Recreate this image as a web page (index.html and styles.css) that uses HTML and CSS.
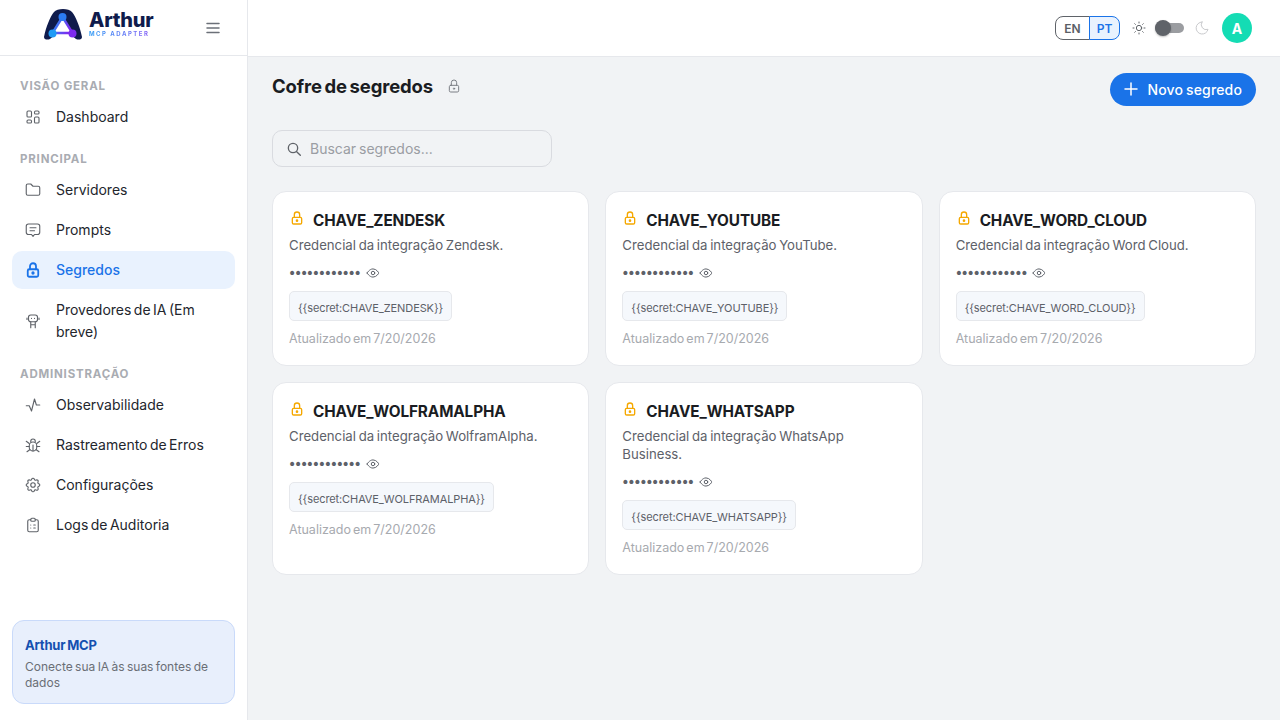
FILE: index.html
```html
<!DOCTYPE html>
<html lang="pt">
<head>
    <meta charset="UTF-8">
    <meta name="viewport" content="width=device-width, initial-scale=1.0">
    <title>Cofre de segredos</title>
    <link rel="stylesheet" href="styles.css">
</head>
<body>
    <svg class="icon-defs" width="0" height="0">
        <defs>
            <linearGradient id="logoGrad" x1="0" y1="0" x2="1" y2="0.4">
                <stop offset="0" stop-color="#1f9bf5"/>
                <stop offset="1" stop-color="#7c2bf0"/>
            </linearGradient>
            <symbol id="i-lock" viewBox="0 0 24 24"><rect x="5" y="11" width="14" height="10" rx="2"/><circle cx="12" cy="16" r="1"/><path d="M8 11V7a4 4 0 0 1 8 0v4"/></symbol>
            <symbol id="i-eye" viewBox="0 0 24 24"><path d="M2 12s3.6-7 10-7 10 7 10 7-3.6 7-10 7-10-7-10-7z"/><circle cx="12" cy="12" r="3"/></symbol>
        </defs>
    </svg>

    <aside class="sidebar">
        <div class="brand">
            <div class="logo">
                <svg class="logo-mark" width="40" height="34" viewBox="0 0 40 34">
                    <path d="M1 30C3 20 7 10 11 5 14 1 26 1 29 5 33 10 37 20 39 30 39 33 35 33 33 32 30 30 29 28 27 27H13C11 28 10 30 7 32 5 33 1 33 1 30Z" fill="#0f1b4c"/>
                    <path d="M19.500 10 9.500 26H29.500Z" fill="#ffffff" stroke="url(#logoGrad)" stroke-width="2.4"/>
                    <circle cx="19.500" cy="10" r="4" fill="#2b7bf3"/>
                    <circle cx="9.500" cy="26.500" r="4" fill="#1f9bf5"/>
                    <circle cx="29.500" cy="26.500" r="4" fill="#7c2bf0"/>
                </svg>
                <div class="logo-text">
                    <div class="logo-name">Arthur</div>
                    <div class="logo-sub">MCP ADAPTER</div>
                </div>
            </div>
            <svg class="burger" width="16" height="16" viewBox="0 0 16 16"><path d="M2 3.500h12M2 8h12M2 12.500h12"/></svg>
        </div>

        <nav class="nav">
            <div class="nav-label first">VISÃO GERAL</div>
            <a class="nav-item">
                <svg class="nav-icon" viewBox="0 0 24 24"><rect x="4" y="4" width="6" height="8" rx="1.500"/><rect x="14" y="4" width="6" height="4" rx="1.500"/><rect x="4" y="16" width="6" height="4" rx="1.500"/><rect x="14" y="12" width="6" height="8" rx="1.500"/></svg>
                Dashboard
            </a>

            <div class="nav-label">PRINCIPAL</div>
            <a class="nav-item">
                <svg class="nav-icon" viewBox="0 0 24 24"><path d="M5 4h4l3 3h7a2 2 0 0 1 2 2v8a2 2 0 0 1-2 2H5a2 2 0 0 1-2-2V6a2 2 0 0 1 2-2z"/></svg>
                Servidores
            </a>
            <a class="nav-item">
                <svg class="nav-icon" viewBox="0 0 24 24"><path d="M6 4h12a3 3 0 0 1 3 3v8a3 3 0 0 1-3 3h-4l-2 2.500L10 18H6a3 3 0 0 1-3-3V7a3 3 0 0 1 3-3z"/><path d="M8 9h8M8 13h6"/></svg>
                Prompts
            </a>
            <a class="nav-item active">
                <svg class="nav-icon" viewBox="0 0 24 24"><use href="#i-lock"/></svg>
                Segredos
            </a>
            <a class="nav-item tall">
                <svg class="nav-icon" viewBox="0 0 24 24"><rect x="6" y="4" width="12" height="9" rx="3"/><path d="M10 8.500h.01M14 8.500h.01M4 8v2M20 8v2M9 13v8M15 13v8M9 17h6"/></svg>
                <span>Provedores de IA (Em breve)</span>
            </a>

            <div class="nav-label">ADMINISTRAÇÃO</div>
            <a class="nav-item">
                <svg class="nav-icon" viewBox="0 0 24 24"><path d="M3 13h4l3 7 4-16 2.500 8H21"/></svg>
                Observabilidade
            </a>
            <a class="nav-item">
                <svg class="nav-icon" viewBox="0 0 24 24"><path d="M9 8V7a3 3 0 0 1 6 0v1"/><rect x="7" y="8" width="10" height="12" rx="5"/><path d="M12 12v8M3 7l4 3M21 7l-4 3M3 14h4M21 14h-4M4 21l4-3M20 21l-4-3"/></svg>
                Rastreamento de Erros
            </a>
            <a class="nav-item">
                <svg class="nav-icon" viewBox="0 0 24 24"><path d="M10.300 4.300c.4-1.700 3-1.700 3.400 0a1.700 1.700 0 0 0 2.600 1.100c1.500-.9 3.300.8 2.400 2.400a1.700 1.700 0 0 0 1 2.500c1.800.4 1.800 3 0 3.400a1.700 1.700 0 0 0-1 2.600c.9 1.500-.9 3.300-2.400 2.400a1.700 1.700 0 0 0-2.600 1c-.4 1.800-3 1.800-3.400 0a1.700 1.700 0 0 0-2.600-1c-1.500.9-3.300-.9-2.400-2.400a1.700 1.700 0 0 0-1-2.600c-1.800-.4-1.800-3 0-3.400a1.700 1.700 0 0 0 1-2.500c-.9-1.600.9-3.300 2.400-2.400a1.700 1.700 0 0 0 2.600-1.100z"/><circle cx="12" cy="12" r="3"/></svg>
                Configurações
            </a>
            <a class="nav-item">
                <svg class="nav-icon" viewBox="0 0 24 24"><path d="M9 5H7a2 2 0 0 0-2 2v12a2 2 0 0 0 2 2h10a2 2 0 0 0 2-2V7a2 2 0 0 0-2-2h-2"/><rect x="9" y="3" width="6" height="4" rx="1.500"/><path d="M9 12h.01M13 12h2M9 16h.01M13 16h2"/></svg>
                Logs de Auditoria
            </a>
        </nav>

        <div class="promo">
            <div class="promo-title">Arthur MCP</div>
            <div class="promo-text">Conecte sua IA às suas fontes de dados</div>
        </div>
    </aside>

    <div class="page">
        <header class="topbar">
            <div class="lang">
                <span class="lang-btn">EN</span>
                <span class="lang-btn on">PT</span>
            </div>
            <svg class="sun" width="16" height="16" viewBox="0 0 24 24"><circle cx="12" cy="12" r="4"/><path d="M3 12h1.500M19.500 12H21M12 3v1.500M12 19.500V21M5.600 5.600l1 1M17.400 17.400l1 1M5.600 18.400l1-1M17.400 6.600l1-1"/></svg>
            <div class="toggle"><span class="knob"></span></div>
            <svg class="moon" width="16" height="16" viewBox="0 0 24 24"><path d="M12 3a9 9 0 1 0 9 11A7.500 7.500 0 0 1 12 3z"/></svg>
            <div class="avatar">A</div>
        </header>

        <main class="main">
            <div class="page-head">
                <div class="page-title">
                    <h1>Cofre de segredos</h1>
                    <svg class="title-lock" width="16" height="16"><use href="#i-lock"/></svg>
                </div>
                <button class="new-btn">
                    <svg width="16" height="16" viewBox="0 0 16 16"><path d="M8 2v12M2 8h12"/></svg>
                    Novo segredo
                </button>
            </div>

            <div class="search">
                <svg width="16" height="16" viewBox="0 0 24 24"><circle cx="10.500" cy="10.500" r="7"/><path d="M16 16l5.500 5.500"/></svg>
                <span>Buscar segredos...</span>
            </div>

            <div class="cards">
                <div class="card">
                    <div class="card-head"><svg class="card-lock" width="16" height="16"><use href="#i-lock"/></svg><h3>CHAVE_ZENDESK</h3></div>
                    <p class="card-desc">Credencial da integração Zendesk.</p>
                    <div class="mask"><span class="dots">••••••••••••</span><svg class="eye" width="14" height="14"><use href="#i-eye"/></svg></div>
                    <code class="chip">{{secret:CHAVE_ZENDESK}}</code>
                    <div class="updated">Atualizado em 7/20/2026</div>
                </div>
                <div class="card">
                    <div class="card-head"><svg class="card-lock" width="16" height="16"><use href="#i-lock"/></svg><h3>CHAVE_YOUTUBE</h3></div>
                    <p class="card-desc">Credencial da integração YouTube.</p>
                    <div class="mask"><span class="dots">••••••••••••</span><svg class="eye" width="14" height="14"><use href="#i-eye"/></svg></div>
                    <code class="chip">{{secret:CHAVE_YOUTUBE}}</code>
                    <div class="updated">Atualizado em 7/20/2026</div>
                </div>
                <div class="card">
                    <div class="card-head"><svg class="card-lock" width="16" height="16"><use href="#i-lock"/></svg><h3>CHAVE_WORD_CLOUD</h3></div>
                    <p class="card-desc">Credencial da integração Word Cloud.</p>
                    <div class="mask"><span class="dots">••••••••••••</span><svg class="eye" width="14" height="14"><use href="#i-eye"/></svg></div>
                    <code class="chip">{{secret:CHAVE_WORD_CLOUD}}</code>
                    <div class="updated">Atualizado em 7/20/2026</div>
                </div>
                <div class="card">
                    <div class="card-head"><svg class="card-lock" width="16" height="16"><use href="#i-lock"/></svg><h3>CHAVE_WOLFRAMALPHA</h3></div>
                    <p class="card-desc">Credencial da integração WolframAlpha.</p>
                    <div class="mask"><span class="dots">••••••••••••</span><svg class="eye" width="14" height="14"><use href="#i-eye"/></svg></div>
                    <code class="chip">{{secret:CHAVE_WOLFRAMALPHA}}</code>
                    <div class="updated">Atualizado em 7/20/2026</div>
                </div>
                <div class="card">
                    <div class="card-head"><svg class="card-lock" width="16" height="16"><use href="#i-lock"/></svg><h3>CHAVE_WHATSAPP</h3></div>
                    <p class="card-desc">Credencial da integração WhatsApp Business.</p>
                    <div class="mask"><span class="dots">••••••••••••</span><svg class="eye" width="14" height="14"><use href="#i-eye"/></svg></div>
                    <code class="chip">{{secret:CHAVE_WHATSAPP}}</code>
                    <div class="updated">Atualizado em 7/20/2026</div>
                </div>
            </div>
        </main>
    </div>
</body>
</html>
```

FILE: styles.css
```css
* {
    box-sizing: border-box;
}

body {
    font-family: 'Inter', 'Liberation Sans', sans-serif;
    display: flex;
    height: 100vh;
    margin: 0;
    overflow: hidden;
    background-color: #f1f3f5;
    color: #1c1f26;
    word-spacing: -1px;
}

.icon-defs {
    position: absolute;
}

svg {
    fill: none;
    stroke: currentColor;
    stroke-linecap: round;
    stroke-linejoin: round;
    stroke-width: 1.500;
    flex-shrink: 0;
}

/* Sidebar */
.sidebar {
    width: 248px;
    flex-shrink: 0;
    display: flex;
    flex-direction: column;
    background-color: #ffffff;
    border-right: 1px solid #e6e8ec;
}

.brand {
    height: 56px;
    flex-shrink: 0;
    display: flex;
    align-items: center;
    justify-content: space-between;
    padding: 0 26px 0 43px;
    border-bottom: 1px solid #e6e8ec;
}

.logo {
    display: flex;
    align-items: center;
    gap: 6px;
    margin-bottom: 8px;
}

.logo-mark {
    stroke: none;
    margin-top: 1px;
}

.logo-text {
    margin-top: 2px;
}

.logo-name {
    font-size: 20px;
    line-height: 19px;
    font-weight: 800;
    color: #0f1b4c;
    letter-spacing: -0.2px;
}

.logo-sub {
    font-size: 6px;
    line-height: 8px;
    font-weight: 700;
    letter-spacing: 1.500px;
    word-spacing: 0;
    background: linear-gradient(90deg, #2f9bf5, #8a5cf6);
    -webkit-background-clip: text;
    background-clip: text;
    color: transparent;
}

.burger {
    color: #6b7078;
}

.nav {
    flex: 1;
    padding: 0 12px;
}

.nav-label {
    font-size: 11.500px;
    line-height: 16px;
    font-weight: 700;
    color: #a9acb2;
    letter-spacing: 0.8px;
    word-spacing: 0;
    padding-left: 8px;
    margin: 15px 0 4px;
}

.nav-label.first {
    margin-top: 22px;
}

.nav-item {
    display: flex;
    align-items: center;
    gap: 14px;
    min-height: 38px;
    padding: 0 12px;
    margin-bottom: 2px;
    border-radius: 10px;
    font-size: 14px;
    line-height: 22px;
    word-spacing: -1.500px;
    color: #23262d;
}

.nav-item.tall {
    padding-top: 8px;
    padding-bottom: 8px;
}

.nav-item.active {
    background-color: #e9f2fe;
    color: #1a73e8;
    font-weight: 500;
}

.nav-icon {
    width: 18px;
    height: 18px;
    color: #5f6369;
    stroke-width: 1.500;
}

.nav-item.active .nav-icon {
    color: #1a73e8;
    stroke-width: 2.400;
}

.promo {
    margin: 0 12px 16px;
    height: 84px;
    padding: 15px 12px;
    background-color: #e8effc;
    border: 1px solid #c9dafa;
    border-radius: 12px;
}

.promo-title {
    font-size: 13px;
    line-height: 18px;
    font-weight: 700;
    color: #1450b0;
    letter-spacing: -0.2px;
}

.promo-text {
    margin-top: 5px;
    font-size: 12px;
    line-height: 16px;
    color: #6a6e76;
}

/* Topbar */
.page {
    flex: 1;
    display: flex;
    flex-direction: column;
    min-width: 0;
}

.topbar {
    height: 57px;
    flex-shrink: 0;
    display: flex;
    align-items: center;
    justify-content: flex-end;
    padding-right: 28px;
    background-color: #ffffff;
    border-bottom: 1px solid #e6e8ec;
}

.lang {
    display: flex;
    margin-right: 11px;
}

.lang-btn {
    width: 35px;
    height: 24px;
    display: flex;
    justify-content: center;
    align-items: center;
    font-size: 12px;
    font-weight: 600;
    color: #5a5e66;
    border: 1px solid #5f6369;
    border-radius: 8px 0 0 8px;
}

.lang-btn.on {
    width: 31px;
    margin-left: -1px;
    color: #1a73e8;
    background-color: #e9f2fe;
    border-color: #1a73e8;
    border-radius: 0 8px 8px 0;
}

.sun {
    color: #55595f;
    stroke-width: 1.400;
}

.toggle {
    position: relative;
    width: 29px;
    height: 10px;
    margin: 0 10px 0 8px;
    background-color: #9b9da1;
    border-radius: 5px;
}

.knob {
    position: absolute;
    left: 0;
    top: -3px;
    width: 16px;
    height: 16px;
    border-radius: 50%;
    background-color: #5f6369;
    box-shadow: 0 1px 2px rgba(0, 0, 0, 0.25);
}

.moon {
    color: #c9cacd;
}

.avatar {
    width: 30px;
    height: 30px;
    margin-left: 12px;
    display: flex;
    justify-content: center;
    align-items: center;
    border-radius: 50%;
    background-color: #14dcb4;
    color: #ffffff;
    font-size: 14px;
    font-weight: 700;
}

/* Main */
.main {
    flex: 1;
    padding: 16px 24px;
    min-height: 0;
}

.page-head {
    display: flex;
    justify-content: space-between;
    align-items: flex-start;
    height: 57px;
}

.page-title {
    display: flex;
    align-items: center;
    gap: 13px;
    height: 26px;
}

.page-title h1 {
    margin: 0;
    font-size: 18.500px;
    font-weight: 700;
    letter-spacing: -0.15px;
    word-spacing: -1.500px;
    color: #1a1c22;
}

.title-lock {
    color: #7b7f85;
}

.new-btn {
    height: 33px;
    display: flex;
    align-items: center;
    gap: 9px;
    padding: 0 14px 1px 13px;
    border: none;
    border-radius: 17px;
    background-color: #1a73e8;
    color: #ffffff;
    font-family: inherit;
    font-size: 14px;
    font-weight: 500;
    word-spacing: -1px;
    letter-spacing: 0.15px;
}

.search {
    width: 280px;
    height: 37px;
    display: flex;
    align-items: center;
    gap: 8px;
    padding: 0 13px;
    border: 1px solid #d9dbe0;
    border-radius: 10px;
    color: #5f6369;
    font-size: 14px;
}

.search svg {
    stroke-width: 2;
}

.search span {
    color: #9a9da3;
}

.cards {
    display: grid;
    grid-template-columns: repeat(3, 1fr);
    gap: 16px;
    margin-top: 24px;
}

.card {
    padding: 17px 16px 18px;
    background-color: #ffffff;
    border: 1px solid #e6e8ec;
    border-radius: 14px;
}

.card-head {
    display: flex;
    align-items: flex-start;
    gap: 8px;
    height: 24px;
}

.card-lock {
    color: #f5a800;
    margin-top: 1px;
    stroke-width: 2;
}

.card-head h3 {
    margin: 1px 0 0;
    font-size: 15.300px;
    line-height: 22px;
    font-weight: 700;
    letter-spacing: -0.1px;
    color: #1a1c22;
}

.card-desc {
    margin: 3px 0 0;
    font-size: 13.200px;
    line-height: 18px;
    color: #5d6169;
}

.mask {
    display: flex;
    align-items: center;
    gap: 6px;
    margin-top: 10px;
    height: 18px;
    margin-left: -1px;
    color: #5d6169;
}

.dots {
    font-size: 14px;
    font-family: 'DejaVu Sans', sans-serif;
    letter-spacing: -2.300px;
}

.eye {
    stroke-width: 1.700;
}

.chip {
    display: block;
    width: fit-content;
    margin-top: 9px;
    padding: 2px 8px 0;
    height: 30px;
    line-height: 28px;
    background-color: #f5f8fc;
    border: 1px solid #e6e8ec;
    border-radius: 5px;
    font-family: 'Inter', sans-serif;
    font-size: 11px;
    letter-spacing: -0.1px;
    color: #5d6169;
}

.updated {
    margin-top: 9px;
    font-size: 12.500px;
    line-height: 17px;
    word-spacing: -1.500px;
    color: #a7aaaf;
}
```
